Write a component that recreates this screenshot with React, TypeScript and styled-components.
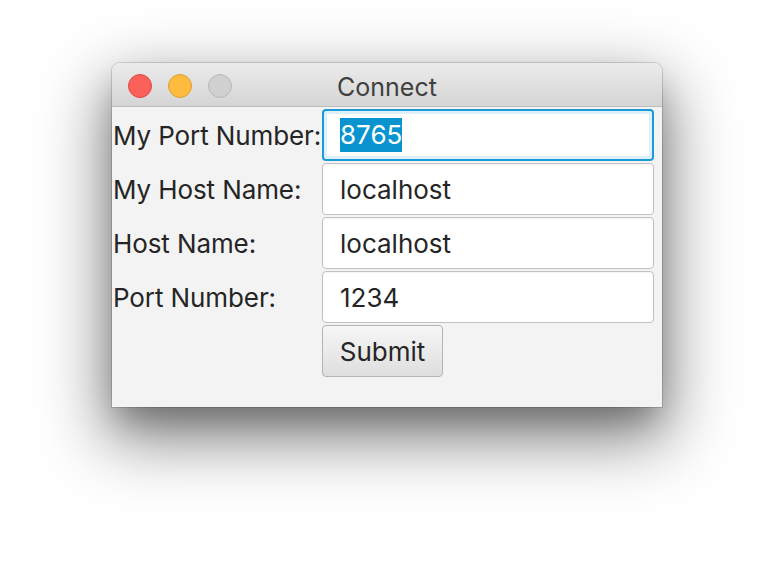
import React from "react";
import styled, { createGlobalStyle } from "styled-components";

const GlobalStyle = createGlobalStyle`
  html, body {
    margin: 0;
    padding: 0;
    background: #ffffff;
  }
  body {
    font-family: "Inter", "Liberation Sans", sans-serif;
  }
`;

const Page = styled.div`
  width: 774px;
  height: 568px;
  padding: 63px 0 0 112px;
  box-sizing: border-box;
  overflow: hidden;
`;

const Window = styled.div`
  width: 550px;
  height: 344px;
  background: #f3f3f3;
  border-radius: 8px 8px 0 0;
  box-shadow: 0 26px 66px 6px rgba(0, 0, 0, 0.5),
    0 18px 30px -6px rgba(0, 0, 0, 0.22), 0 0 0 1px rgba(0, 0, 0, 0.14);
  display: flex;
  flex-direction: column;
  overflow: hidden;
`;

const TitleBar = styled.div`
  height: 43px;
  flex-shrink: 0;
  position: relative;
  display: flex;
  align-items: center;
  justify-content: center;
  background: linear-gradient(#ebebeb, #d5d5d5);
  border-bottom: 1px solid #bdbdbd;
  border-radius: 8px 8px 0 0;
`;

const Lights = styled.div`
  position: absolute;
  left: 16px;
  top: 11px;
  display: flex;
  gap: 16px;
`;

const Light = styled.span<{ $fill: string; $edge: string }>`
  width: 24px;
  height: 24px;
  border-radius: 50%;
  background: ${(p) => p.$fill};
  border: 1px solid ${(p) => p.$edge};
  box-sizing: border-box;
`;

const Title = styled.div`
  font-size: 25px;
  color: #404040;
  padding-top: 4px;
`;

const Form = styled.div`
  display: grid;
  grid-template-columns: 210px 332px;
  grid-auto-rows: 52px;
  row-gap: 2px;
  padding: 2px 0 0 0;
  align-items: center;
`;

const Label = styled.div`
  font-size: 26px;
  color: #252525;
  padding-left: 1px;
  white-space: nowrap;
  letter-spacing: -0.1px;
`;

const Field = styled.div<{ $focused?: boolean }>`
  height: 52px;
  box-sizing: border-box;
  background: #ffffff;
  border-radius: 4px;
  border: ${(p) => (p.$focused ? "2px solid #1a9bd7" : "1px solid #c2c2c2")};
  box-shadow: ${(p) =>
    p.$focused
      ? "inset 0 0 0 3px #def1fa"
      : "inset 0 1px 1px rgba(0, 0, 0, 0.04)"};
  display: flex;
  align-items: center;
  padding-left: ${(p) => (p.$focused ? "16px" : "17px")};
  font-size: 26px;
  color: #252525;
`;

const Selected = styled.span`
  background: #0a94cf;
  color: #ffffff;
  padding: 2px 0;
  line-height: 30px;
`;

const Button = styled.div`
  width: 121px;
  height: 52px;
  box-sizing: border-box;
  border: 1px solid #b4b4b4;
  border-radius: 4px;
  background: linear-gradient(#f6f6f6, #dedede);
  display: flex;
  align-items: center;
  justify-content: center;
  font-size: 26px;
  color: #252525;
`;

const rows = [
  { label: "My Port Number:", value: "8765", focused: true },
  { label: "My Host Name:", value: "localhost" },
  { label: "Host Name:", value: "localhost" },
  { label: "Port Number:", value: "1234" },
];

export default function App() {
  return (
    <>
      <GlobalStyle />
      <Page>
        <Window>
          <TitleBar>
            <Lights>
              <Light $fill="#fc605b" $edge="#de4a44" />
              <Light $fill="#fdbc40" $edge="#dea034" />
              <Light $fill="#d0d0d0" $edge="#b9b9b9" />
            </Lights>
            <Title>Connect</Title>
          </TitleBar>
          <Form>
            {rows.map((r) => (
              <React.Fragment key={r.label}>
                <Label>{r.label}</Label>
                <Field $focused={r.focused}>
                  {r.focused ? <Selected>{r.value}</Selected> : r.value}
                </Field>
              </React.Fragment>
            ))}
            <span />
            <Button>Submit</Button>
          </Form>
        </Window>
      </Page>
    </>
  );
}
